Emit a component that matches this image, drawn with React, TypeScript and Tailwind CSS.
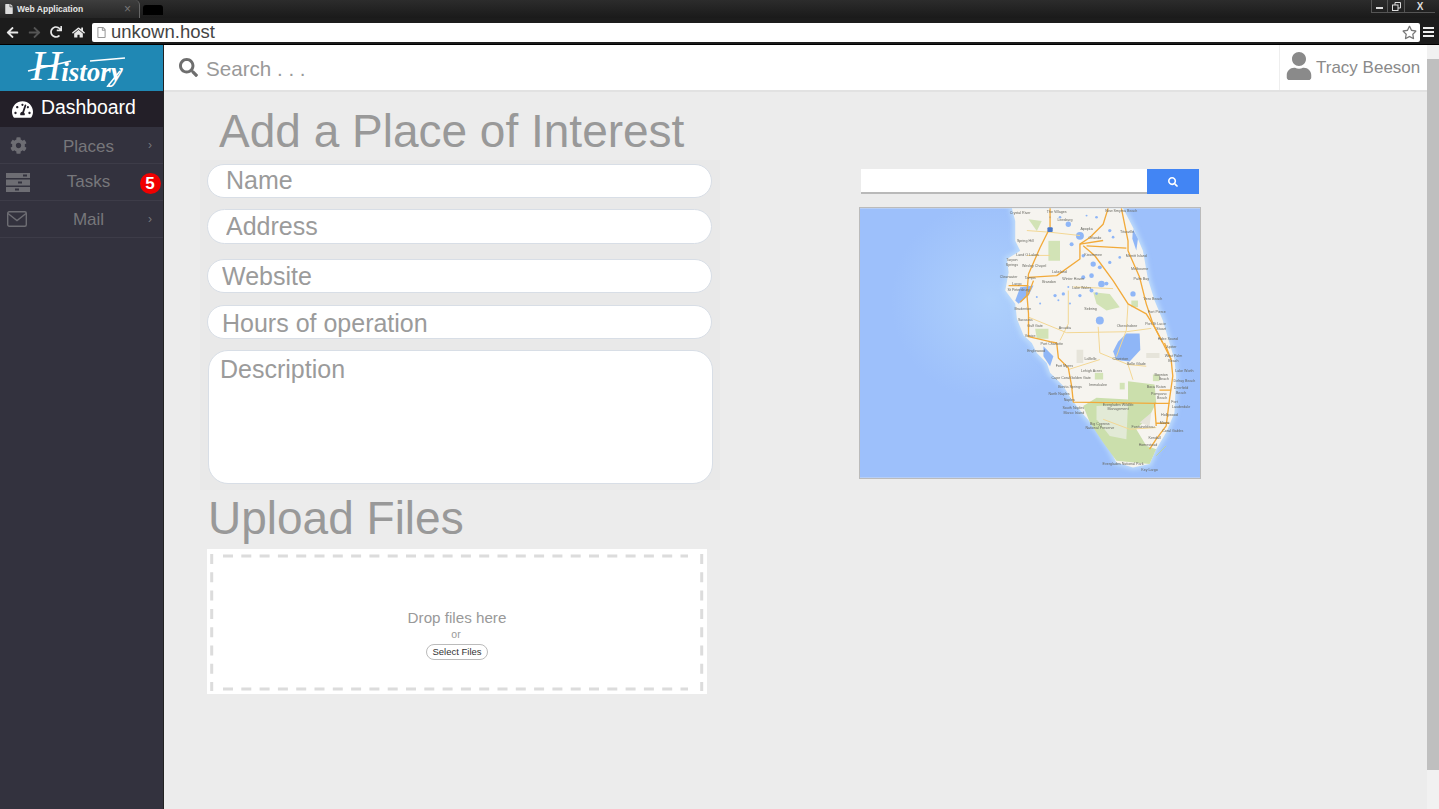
import { FaArrowLeft, FaArrowRight, FaCog, FaFile, FaHome, FaRedo, FaRegFile, FaRegStar, FaSearch, FaTachometerAlt, FaUser } from 'react-icons/fa'

const labels: [string, number, number][] = [
  ['Crystal River', 510, 161], ['The Villages', 620, 156], ['Leesburg', 645, 181], ['New Smyrna Beach', 815, 153],
  ['Apopka', 710, 208], ['Titusville', 832, 216], ['Orlando', 735, 236], ['Spring Hill', 525, 246],
  ['Kissimmee', 730, 288], ['Merritt Island', 860, 290], ['Land O Lakes', 532, 287], ['Tarpon', 485, 302],
  ['Springs', 485, 316], ['Wesley Chapel', 552, 321], ['Melbourne', 870, 329], ['Lakeland', 628, 337],
  ['Clearwater', 475, 352], ['Tampa', 540, 355], ['Palm Bay', 875, 358], ['Winter Haven', 670, 360],
  ['Brandon', 597, 368], ['Largo', 500, 373], ['Lake Wales', 695, 385], ['St Petersburg', 505, 392],
  ['Vero Beach', 910, 419], ['Bradenton', 518, 449], ['Sebring', 722, 450], ['Fort Pierce', 922, 459],
  ['Sarasota', 525, 482], ['Port St Lucie', 918, 494], ['Gulf Gate', 555, 500], ['Okeechobee', 832, 500],
  ['Arcadia', 645, 508], ['Stuart', 935, 511], ['Venice', 540, 530], ['Hobe Sound', 955, 539],
  ['Port Charlotte', 605, 555], ['Jupiter', 965, 564], ['Englewood', 558, 576], ['West Palm', 972, 591],
  ['LaBelle', 722, 599], ['Clewiston', 812, 600], ['Beach', 972, 605], ['Belle Glade', 860, 614],
  ['Fort Myers', 643, 622], ['Lehigh Acres', 725, 635], ['Lake Worth', 1005, 637], ['Boynton', 935, 647],
  ['Cape Coral', 632, 657], ['Golden Gate', 692, 657], ['Beach', 943, 661], ['Delray Beach', 1005, 668],
  ['Immokalee', 745, 680], ['Bonita Springs', 660, 684], ['Boca Raton', 920, 686], ['Deerfield', 995, 689],
  ['Pompano', 928, 705], ['North Naples', 627, 707], ['Beach', 995, 704], ['Beach', 938, 719],
  ['Naples', 658, 723], ['Fort', 975, 729], ['Everglades Wildlife', 805, 740], ['Lauderdale', 995, 745],
  ['South Naples', 670, 747], ['Management', 805, 752], ['Marco Island', 672, 764], ['Hollywood', 960, 769],
  ['Miami', 945, 792], ['Big Cypress', 750, 796], ['National Preserve', 750, 808], ['Fontainebleau', 880, 806],
  ['Coral Gables', 970, 817], ['Kendall', 915, 837], ['Homestead', 895, 859], ['Everglades National Park', 820, 918],
  ['Key Largo', 900, 936],
]

const coast = 'M485 143 L495 181 L495 241 L510 271 L470 296 L475 336 L465 391 L495 431 L500 476 L520 526 L545 549 L560 579 L590 609 L600 639 L640 679 L665 719 L700 764 L740 809 L780 869 L800 909 L850 924 L900 914 L920 869 L950 819 L975 759 L980 649 L975 599 L960 549 L940 481 L915 421 L895 356 L880 271 L850 201 L820 143 Z'

const roads = [
  'M600 143 L600 201 L570 261 L535 341 L530 401 L535 461 L535 530 L600 545 L620 549 L625 594 L655 624 L665 679 L670 727 L920 731',
  'M535 351 L620 346 L690 296 L690 251 L720 231 L760 191 L775 143',
  'M700 256 L735 286 L790 361 L835 431 L890 461 L915 501 L940 549 L965 599',
  'M815 143 L835 241 L835 271 L870 351 L890 431 L910 491 L940 549',
  'M945 549 L965 599 L970 649 L960 719 L950 799 L920 839 L900 869',
  'M710 256 L830 263 M690 251 L760 240 M915 729 L920 799 M915 731 L960 731 M930 691 L965 691 M920 791 L960 791',
  'M510 426 L535 401 L550 361 M475 376 L535 376',
]

const thinRoads = [
  'M535 471 L650 518 L830 515 L905 505',
  'M655 391 L655 491 L630 541',
  'M745 500 L750 579 L835 614 L890 619',
  'M655 629 L750 599 M835 614 L850 660',
  'M835 431 L830 510 L800 590',
  'M530 285 L600 285 M670 380 L790 385',
  'M760 779 L840 809 L920 804',
  'M530 210 L600 215 L690 225',
]

const lakes = [
  'M790 575 L805 545 L830 520 L870 520 L872 570 L840 605 L800 600 Z',
  'M510 381 L550 376 L535 406 L505 431 L495 421 Z',
  'M580 559 L610 589 L600 619 L580 589 Z',
  'M850 205 L865 235 L860 270 L848 235 Z',
]

const specks: [number, number, number][] = [
  [690, 226, 12], [655, 191, 8], [665, 251, 6], [700, 286, 5], [730, 311, 8], [750, 321, 6],
  [755, 371, 10], [725, 346, 7], [700, 351, 6], [725, 391, 6], [640, 401, 5], [615, 406, 5],
  [690, 406, 5], [750, 481, 12], [850, 401, 8], [780, 306, 5], [810, 291, 4], [770, 370, 6],
  [740, 400, 4], [660, 430, 3], [570, 430, 3], [625, 420, 3], [600, 170, 3], [630, 170, 4],
  [740, 170, 4], [710, 165, 3], [780, 210, 5], [790, 230, 4], [560, 410, 3], [655, 380, 3],
]

const parks = [
  'M595 241 L630 241 L630 301 L595 301 Z',
  'M730 396 L780 401 L810 441 L770 451 L740 431 Z',
  'M555 506 L595 506 L595 536 L560 536 Z',
  'M535 176 L575 181 L560 211 Z',
  'M845 421 L865 421 L865 441 L845 441 Z',
  'M910 644 L930 644 L930 664 L910 664 Z',
  'M735 639 L760 639 L760 659 L735 659 Z',
  'M810 669 L825 669 L825 689 L810 689 Z',
]

function FloridaMap() {
  return (
    <svg viewBox="27 143 1025 812" className="block h-full w-full blur-[0.4px]">
      <defs>
        <radialGradient id="sea" gradientUnits="userSpaceOnUse" cx="420" cy="420" r="300">
          <stop offset="0" stopColor="#aed0fc" />
          <stop offset="1" stopColor="#9dc0fb" />
        </radialGradient>
        <filter id="soft"><feGaussianBlur stdDeviation="7" /></filter>
      </defs>
      <rect x="27" y="143" width="1025" height="812" fill="url(#sea)" />
      <path d={coast} fill="#bcdafb" stroke="#bcdafb" strokeWidth="16" filter="url(#soft)" />
      <path d={coast} fill="#f6f4ef" />
      <path d="M835 664 L915 674 L920 729 L900 769 L860 809 L890 859 L920 869 L900 914 L800 904 L760 849 L720 789 L700 739 L740 714 L835 719 Z" fill="#cbdfac" />
      <path d="M740 739 L835 734 L830 839 L780 829 L740 779 Z" fill="#e2ead6" />
      <path d="M870 789 L905 759 L900 799 Z M890 579 L930 579 L930 594 L890 594 Z M680 569 L700 569 L700 609 L680 609 Z" fill="#e6e4da" />
      {parks.map((d) => <path key={d} d={d} fill="#d2e3b6" />)}
      <path d="M920 889 L950 859" fill="none" stroke="#b9d3a0" strokeWidth="3" />
      {lakes.map((d) => <path key={d} d={d} fill="#8fb6f7" />)}
      {specks.map(([x, y, r]) => <circle key={`${x}-${y}`} cx={x} cy={y} r={r} fill="#8fb6f7" />)}
      {thinRoads.map((d) => <path key={d} d={d} fill="none" stroke="#f3d793" strokeWidth="3" />)}
      {roads.map((d) => <path key={d} d={d} fill="none" stroke="#f2aa3a" strokeWidth="4" strokeLinejoin="round" />)}
      <rect x="592" y="200" width="16" height="14" rx="3" fill="#4a78c8" />
      {labels.map(([text, x, y]) => (
        <text key={`${text}${x}${y}`} x={x} y={y} textAnchor="middle" fontSize="11" fill="#66665f" fontFamily="'Liberation Sans', sans-serif">{text}</text>
      ))}
    </svg>
  )
}

function BrowserChrome() {
  return (
    <div className="h-[45px] shrink-0 bg-black">
      <div className="flex h-[18px] items-stretch bg-gradient-to-b from-[#2c2c2c] to-[#1a1a1a]">
        <div className="flex w-[140px] items-center rounded-tr-[5px] border-r border-[#666] bg-gradient-to-b from-[#3e3e3e] to-[#262626] pl-[5px] pr-[8px]">
          <FaFile className="h-[10px] w-[8px] text-[#ddd]" />
          <span className="ml-[4px] flex-1 text-[8.5px] font-bold text-[#e6e6e6]">Web Application</span>
          <span className="text-[12px] leading-none text-[#777]">×</span>
        </div>
        <div className="mt-[5px] ml-[3px] h-[10px] w-[20px] rounded-t-[3px] bg-black" />
        <div className="flex-1" />
        <div className="mr-[4px] flex h-[13px] items-center border-b border-l border-[#555] text-[#ddd]">
          <div className="flex h-full w-[16px] items-center justify-center border-r border-[#555]"><div className="mt-[3px] h-[2px] w-[7px] bg-[#ddd]" /></div>
          <div className="flex h-full w-[17px] items-center justify-center border-r border-[#555]">
            <svg viewBox="0 0 9 9" className="h-[9px] w-[9px]" fill="none" stroke="#ddd">
              <rect x="0.5" y="3" width="5.5" height="5.5" />
              <path d="M3 3 V0.5 H8.5 V6 H6" />
            </svg>
          </div>
          <div className="flex h-full w-[30px] items-center justify-center text-[10px] font-bold">X</div>
        </div>
      </div>
      <div className="flex h-[26px] items-center bg-[#1c1c1c] pt-[2px]">
        <FaArrowLeft className="ml-[6px] h-[13px] w-[13px] text-[#e8e8e8]" />
        <FaArrowRight className="ml-[9px] h-[13px] w-[13px] text-[#555]" />
        <FaRedo className="ml-[9px] h-[12px] w-[12px] text-[#e8e8e8]" />
        <FaHome className="ml-[10px] h-[13px] w-[13px] text-[#e8e8e8]" />
        <div className="ml-[7px] flex h-[19px] flex-1 items-center rounded-[2px] bg-white pl-[5px] pr-[3px]">
          <FaRegFile className="h-[11px] w-[9px] text-[#999]" />
          <span className="ml-[5px] flex-1 text-[18.5px] leading-none text-[#444]">unkown.host</span>
          <FaRegStar className="h-[15px] w-[15px] text-[#777]" />
        </div>
        <div className="ml-[3px] mr-[5px] flex w-[11px] flex-col gap-[2px]">
          <div className="h-[2px] bg-[#eee]" />
          <div className="h-[2px] bg-[#eee]" />
          <div className="h-[2px] bg-[#eee]" />
        </div>
      </div>
    </div>
  )
}

function TasksIcon() {
  return (
    <svg viewBox="0 0 24 19" className="h-[19px] w-[24px]">
      <rect x="0" y="0" width="24" height="5" fill="#6d6d73" />
      <rect x="0" y="6.5" width="24" height="6" fill="#6d6d73" />
      <rect x="0" y="14" width="24" height="5" fill="#6d6d73" />
      <rect x="17" y="1.5" width="4" height="2" fill="#33323e" />
      <rect x="12" y="8.5" width="4" height="2" fill="#33323e" />
      <rect x="9" y="15.5" width="4" height="2" fill="#33323e" />
    </svg>
  )
}

function MailIcon() {
  return (
    <svg viewBox="0 0 20 16" className="ml-[1px] h-[16px] w-[20px]" fill="none" stroke="#6d6d73" strokeWidth="1.4">
      <rect x="0.7" y="0.7" width="18.6" height="14.6" rx="1.5" />
      <path d="M1 2.5 L10 9.5 L19 2.5" />
    </svg>
  )
}

function NavRow({ icon, label, badge, labelClass = '' }: { icon: React.ReactNode; label: string; badge?: string; labelClass?: string }) {
  return (
    <div className="grid h-[37px] grid-cols-[41px_95px_28px] items-center border-b border-[#3d3c48]">
      <div className="flex justify-start pl-[6px]">{icon}</div>
      <div className={`text-center text-[17px] text-[#77777b] ${labelClass}`}>{label}</div>
      {badge ? (
        <div className="flex justify-center pt-[2px]">
          <span className="flex h-[21px] w-[21px] items-center justify-center rounded-full bg-[#f00000] text-[17px] font-bold leading-none text-white">{badge}</span>
        </div>
      ) : (
        <div className="text-center text-[12px] text-[#77777b]">›</div>
      )}
    </div>
  )
}

function Sidebar() {
  return (
    <aside className="w-[164px] shrink-0 border-r border-[#222] bg-[#33323e]">
      <div className="relative h-[46px] bg-[#2088b4]">
        <div className="flex h-full items-end pb-[7px] pl-[31px] font-['Liberation_Serif',serif] italic leading-none text-white">
          <span className="text-[42px] leading-[36px]">H</span>
          <span className="text-[27px] font-bold leading-[24px]">istory</span>
        </div>
        <svg viewBox="0 0 100 38" className="absolute left-[27px] top-[4px] h-[38px] w-[100px]" fill="none" stroke="#fff" strokeWidth="1.6">
          <path d="M1 22 L44 12" />
          <path d="M63 12 L98 9" />
          <path d="M93 22 L80 38" />
        </svg>
      </div>
      <div className="flex h-[36px] items-center bg-[#231f28] pl-[12px] text-[19.4px] text-white">
        <FaTachometerAlt className="h-[21px] w-[21px]" />
        <span className="mb-[2px] ml-[8px]">Dashboard</span>
      </div>
      <NavRow label="Places" labelClass="pt-[3px]" icon={<FaCog className="ml-[4px] h-[17px] w-[17px] text-[#6d6d73]" />} />
      <NavRow label="Tasks" badge="5" icon={<TasksIcon />} />
      <NavRow label="Mail" labelClass="pt-[2px]" icon={<MailIcon />} />
    </aside>
  )
}

function Field({ placeholder, className }: { placeholder: string; className: string }) {
  return (
    <input
      placeholder={placeholder}
      readOnly
      className={`block w-[505px] rounded-full border border-[#d8dee6] bg-white text-[25px] placeholder:text-[#9b9b9b] ${className}`}
    />
  )
}

function DropZone() {
  return (
    <div className="relative flex h-[145px] w-[500px] flex-col items-center bg-white pt-[59px]">
      <svg className="absolute left-[3px] top-[5px] h-[137px] w-[494px]" fill="none" stroke="#dcdcdc" strokeWidth="3" strokeDasharray="10 8.3">
        <path d="M13 2 H478" />
        <path d="M13 135 H478" />
        <path d="M1.7 0 V137" />
        <path d="M491.7 0 V137" />
      </svg>
      <div className="text-[15.2px] leading-[20px] text-[#999]">Drop files here</div>
      <div className="mt-[-1px] pr-[2px] text-[10.5px] leading-[14px] text-[#999]">or</div>
      <button className="mt-[3px] flex h-[16px] w-[62px] items-center justify-center rounded-full border border-[#bbb] text-[9.5px] font-medium text-[#333]">Select Files</button>
    </div>
  )
}

export default function App() {
  return (
    <div className="flex h-[809px] w-[1439px] flex-col overflow-hidden bg-[#ececec] font-['Liberation_Sans',sans-serif]">
      <BrowserChrome />
      <div className="flex flex-1">
        <Sidebar />
        <main className="flex flex-1 flex-col">
          <header className="flex h-[47px] items-center border-b-2 border-[#e2e2e2] bg-white pl-[15px]">
            <FaSearch className="h-[19px] w-[19px] text-[#6e6e6e]" />
            <span className="ml-[8px] flex-1 pt-[4px] text-[20.6px] text-[#999]">Search . . .</span>
            <div className="flex h-full w-[148px] items-center border-l border-[#eee] pl-[6px]">
              <FaUser className="mb-[3px] h-[28px] w-[26px] text-[#8a8a8a]" />
              <span className="ml-[4px] pt-[1px] text-[17px] text-[#8a8a8a]">Tracy Beeson</span>
            </div>
          </header>
          <div className="flex flex-1">
            <section className="ml-[43px] w-[516px]">
              <h1 className="mt-[14px] ml-[12px] text-[46px] leading-[50px] text-[#999]">Add a Place of Interest</h1>
              <form className="ml-[-7px] mt-[4px] w-[520px] bg-[#e9e9e9] pb-[6px] pl-[7px] pt-[4px]">
                <Field placeholder="Name" className="h-[34px] pl-[18px]" />
                <Field placeholder="Address" className="mt-[11px] h-[35px] pl-[18px]" />
                <Field placeholder="Website" className="mt-[15px] h-[34px] pl-[14px] pt-[2px]" />
                <Field placeholder="Hours of operation" className="mt-[12px] h-[34px] pl-[14px] pt-[3px]" />
                <textarea
                  placeholder="Description"
                  readOnly
                  className="ml-[1px] mt-[11px] block h-[134px] w-[505px] resize-none rounded-[20px] border border-[#d8dee6] bg-white pl-[11px] pt-[3px] text-[25px] leading-[30px] placeholder:text-[#9b9b9b]"
                />
              </form>
              <h2 className="mt-[3px] ml-[1px] text-[46px] leading-[50px] text-[#999]">Upload Files</h2>
              <div className="mt-[6px]">
                <DropZone />
              </div>
            </section>
            <section className="ml-[136px] pt-[77px]">
              <div className="ml-[2px] flex h-[25px] w-[338px]">
                <div className="h-[25px] flex-1 border-b-2 border-[#b9b9b9] bg-white" />
                <div className="flex h-[25px] w-[52px] items-center justify-center bg-[#4285f4]">
                  <FaSearch className="h-[10px] w-[10px] text-white" />
                </div>
              </div>
              <div className="mt-[13px] h-[272px] w-[342px] border border-[#bbb]">
                <FloridaMap />
              </div>
            </section>
          </div>
        </main>
        <div className="flex w-[12px] shrink-0 flex-col bg-[#f1f1f1]">
          <div className="mt-[14px] h-[711px] bg-[#bfbfbf]" />
        </div>
      </div>
    </div>
  )
}
